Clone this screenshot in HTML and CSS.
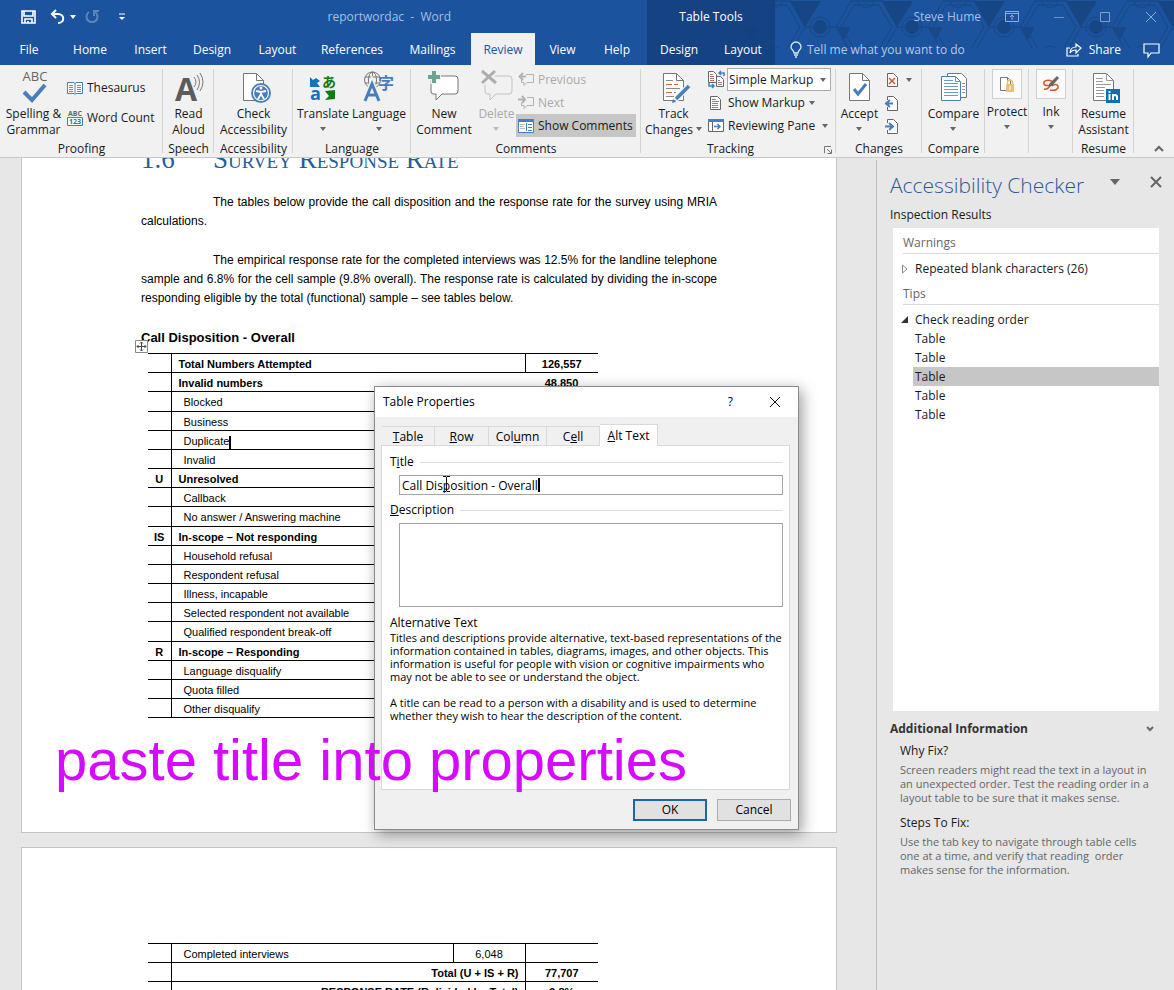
FILE: index.html
```html
<!DOCTYPE html>
<html lang="en">
<head>
<meta charset="utf-8">
<title>reportwordac - Word</title>
<link rel="stylesheet" href="styles.css">
</head>
<body>
<div class="app">
  <header class="header">
    <svg class="header-art" aria-hidden="true">
      <defs>
        <pattern id="hex" width="92" height="54" patternUnits="userSpaceOnUse">
          <g fill="none" stroke="#164684" stroke-width="1">
            <path d="M0 27 15 1h31l15 26-15 26H15zM5 27 18 5h25l13 22-13 22H18zM61 27h31M46 1 61-25M46 53l15 26"/>
            <circle cx="76" cy="27" r="10"/><circle cx="30" cy="0" r="8"/><circle cx="30" cy="54" r="8"/>
          </g>
          <path d="M46 1h31L61 27z" fill="#164684"/>
          <circle cx="76" cy="27" r="7" fill="#164684"/>
          <path d="M0 27h15L8 40z" fill="#18498b"/>
        </pattern>
      </defs>
      <rect width="100%" height="100%" fill="url(#hex)"/>
    </svg>
    <div class="title-row">
      <div class="qat">
        <button class="plain" aria-label="Save"><svg width="16" height="16" viewBox="0 0 16 16" fill="none" stroke="#fff" stroke-width="1.600"><path d="M2 2h13v12H2zM4 2v5h9V2M5 14v-4h7v4M8 12v2"/></svg></button>
        <button class="plain undo" aria-label="Undo"><svg width="15" height="15" viewBox="0 0 15 15" fill="none" stroke="#fff" stroke-width="2"><path d="M6 1 2 5l4 4M2 5h6c7 0 7 9 0 9"/></svg><i class="caret white"></i></button>
        <button class="plain redo" aria-label="Repeat"><svg width="15" height="15" viewBox="0 0 15 15" fill="none" stroke="#5d85bd" stroke-width="2"><path d="M4 3a5.500 5.500 0 1 0 6 0M9 7V2h5"/></svg></button>
        <button class="plain" aria-label="Customize toolbar"><svg width="8" height="8" viewBox="0 0 8 8"><path d="M1 1h6" stroke="#fff"/><path d="M1 4h6L4 7z" fill="#fff"/></svg></button>
      </div>
      <span class="doc-title">reportwordac&nbsp; -&nbsp; Word</span>
    </div>
    <nav class="tabs" aria-label="Ribbon">
      <button>File</button><button>Home</button><button>Insert</button><button>Design</button><button>Layout</button><button>References</button><button>Mailings</button><button class="active">Review</button><button>View</button><button>Help</button>
    </nav>
    <div class="context">
      <span>Table Tools</span>
      <div class="context-tabs"><button>Design</button><button>Layout</button></div>
    </div>
    <div class="window-row">
      <span class="user">Steve Hume</span>
      <svg width="14" height="11" viewBox="0 0 14 11" fill="none" stroke="#90abd4"><path d="M.5.5h13v10H.5zM.5 2.500h13M7 9V4M5 6l2-2 2 2"/></svg>
      <svg width="12" height="12" viewBox="0 0 12 12" fill="none" stroke="#6f93c6"><path d="M1 6.500h10"/></svg>
      <svg width="12" height="12" viewBox="0 0 12 12" fill="none" stroke="#7f9fcd"><path d="M1.500 1.500h9v9h-9z"/></svg>
      <svg width="12" height="12" viewBox="0 0 12 12" fill="none" stroke="#90abd4"><path d="m1 1 10 10M11 1 1 11"/></svg>
    </div>
    <div class="tell-row">
      <button class="tell"><svg width="12" height="16" viewBox="0 0 12 16" fill="none" stroke="#dce7f5" stroke-width="1.300"><path d="M4 11c0-3-3-3-3-6a5 5 0 0 1 10 0c0 3-3 3-3 6zM4 13h4M5 15h2"/></svg>Tell me what you want to do</button>
      <button class="share"><svg width="16" height="14" viewBox="0 0 16 14" fill="none" stroke="#fff" stroke-width="1.200"><path d="M4 5H1v8h11v-2M4 10c0-4 3-6 6-6V1l5 4-5 5V7C7 7 5 8 4 10z"/></svg>Share</button>
      <button class="plain" aria-label="Comments"><svg width="17" height="15" viewBox="0 0 17 15" fill="none" stroke="#fff" stroke-width="1.200"><path d="M1 1h15v9H8l-3 4v-4H1z"/></svg></button>
    </div>
  </header>

  <section class="ribbon" aria-label="Review">
    <div class="group proofing">
      <div class="body">
        <button class="large"><svg width="32" height="32" viewBox="0 0 32 32"><text x="17" y="10" text-anchor="middle" class="abc">ABC</text><path d="m6 21 8 8L27 14" fill="none" stroke="#4a7ebb" stroke-width="4"/></svg><span>Spelling &amp;<br>Grammar</span></button>
        <div class="stack two">
          <button class="small"><svg width="16" height="16" viewBox="0 0 16 16" fill="#fff" stroke="#7a8a9c"><path d="M.5 2.500H7l1 1 1-1h6.500v11H9l-1 1-1-1H.5zM8 3v11" stroke="#4a7ebb"/><path d="M2 5.500h4M2 7.500h4M2 9.500h4M2 11.500h4M10 5.500h4M10 7.500h4M10 9.500h4M10 11.500h4"/></svg>Thesaurus</button>
          <button class="small"><svg width="16" height="18" viewBox="0 0 16 18"><text x="8" y="7" text-anchor="middle" class="mini">ABC</text><path d="M.5 8.500h15v8H.5z" fill="#fff" stroke="#4a7ebb"/><text x="8" y="15" text-anchor="middle" class="mini blue">123</text></svg>Word Count</button>
        </div>
      </div>
      <h2>Proofing</h2>
    </div>
    <div class="group speech">
      <div class="body">
        <button class="large"><svg width="32" height="32" viewBox="0 0 32 32"><text x="2" y="30" class="speak">A</text><path d="M21 6q4 5 0 10M24 4q5 7 0 15M27 2q6 9 0 18" fill="none" stroke="#767676"/></svg><span>Read<br>Aloud</span></button>
      </div>
      <h2>Speech</h2>
    </div>
    <div class="group access">
      <div class="body">
        <button class="large"><svg width="32" height="32" viewBox="0 0 32 32"><path d="M5.500 2.500h13l7 7v20h-20z" fill="#fff" stroke="#777"/><path d="M18.500 2.500v7h7" fill="none" stroke="#777"/><circle cx="23" cy="22" r="10" fill="#4a7ebb"/><circle cx="23" cy="22" r="7.500" fill="none" stroke="#fff" stroke-width="1.200"/><circle cx="23" cy="17" r="1.500" fill="#fff"/><path d="m18 20 5 1 5-1m-5 1v3m-3 4 3-5 3 5" fill="none" stroke="#fff" stroke-width="1.800"/></svg><span>Check<br>Accessibility</span></button>
      </div>
      <h2>Accessibility</h2>
    </div>
    <div class="group language">
      <div class="body">
        <button class="large"><svg width="32" height="32" viewBox="0 0 32 32"><text x="3" y="29" class="tr-a">a</text><text x="15" y="16" class="tr-j">あ</text><path d="M3 6v10h10l-3-4 3-2-4-3-3 2z" fill="#1472c4"/><path d="M28 19v9l-10 1 4-4-4-5z" fill="#107c10"/></svg><span>Translate<br><i class="caret"></i></span></button>
        <button class="large"><svg width="32" height="32" viewBox="0 0 32 32"><g fill="none" stroke="#777"><circle cx="9.500" cy="9" r="8"/><ellipse cx="9.500" cy="9" rx="4" ry="8"/><path d="M9.500 1v16M2 6h15M2 12h15"/></g><path d="m2 30 7-19 7 19M5 24h9" fill="none" stroke="#f1f1f1" stroke-width="5"/><path d="m2 30 7-17 7 17M5 24h9" fill="none" stroke="#4a7ebb" stroke-width="3"/><text x="15" y="18" class="zi">字</text></svg><span>Language<br><i class="caret"></i></span></button>
      </div>
      <h2>Language</h2>
    </div>
    <div class="group comments">
      <div class="body">
        <button class="large"><svg width="32" height="32" viewBox="0 0 32 32"><path d="M5 5h22q3 0 3 3v12q0 3-3 3H14l-6 6v-6H5q-2 0-2-3V8q0-3 2-3z" fill="#fff" stroke="#777"/><path d="M6-1v14M-1 6h14" stroke="#f1f1f1" stroke-width="7"/><path d="M6 0v12M0 6h12" stroke="#6aa58f" stroke-width="4"/></svg><span>New<br>Comment</span></button>
        <button class="large disabled" disabled><svg width="32" height="32" viewBox="0 0 32 32"><path d="M6 5h22q3 0 3 3v12q0 3-3 3H15l-6 6v-6H6q-2 0-2-3V8q0-3 2-3z" fill="none" stroke="#c3c3c3"/><path d="m0-1 17 14M16-1 0 13" stroke="#f1f1f1" stroke-width="6"/><path d="m1 0 14 12M14 0 1 12" stroke="#adadad" stroke-width="3"/></svg><span>Delete<br><i class="caret"></i></span></button>
        <div class="stack">
          <button class="small disabled" disabled><svg width="16" height="16" viewBox="0 0 16 16" fill="none" stroke="#b3b3b3"><path d="M8 2.500h7.500v8H9l-3 3v-3H3.500V8"/><path d="M8 4.500H2M5 1 1.500 4.500 5 8" stroke-width="2"/></svg>Previous</button>
          <button class="small disabled" disabled><svg width="16" height="16" viewBox="0 0 16 16" fill="none" stroke="#b3b3b3"><path d="M9 2.500h6.500v8H9l-3 3v-3H3.500V8"/><path d="M0 4.500h6M4 1l3 3.500L4 8" stroke-width="2"/></svg>Next</button>
          <button class="small pressed"><svg width="16" height="16" viewBox="0 0 16 16"><path d="M.5 1.500h15v13H.5z" fill="#fff" stroke="#4a7ebb"/><path d="M0 1h16v3H0z" fill="#4a7ebb"/><path d="M2 6.500h5M2 8.500h4M2 10.500h5" stroke="#bbb"/><path d="M8.500 5v8M10 6.500h4M10 9.500h4M10 12.500h4" stroke="#4a7ebb"/></svg>Show Comments</button>
        </div>
      </div>
      <h2>Comments</h2>
    </div>
    <div class="group tracking">
      <div class="body">
        <button class="large"><svg width="32" height="32" viewBox="0 0 32 32"><path d="M5.500 2.500h13l7 7v20h-20z" fill="#fff" stroke="#777"/><path d="M18.500 2.500v7h7" fill="none" stroke="#777"/><path d="M8 9.500h7M8 17.500h14M8 25.500h8" stroke="#8a8a8a"/><path d="M8 13.500h12M8 21.500h10" stroke="#d9694a" stroke-dasharray="6 2"/><path d="m17 29 14-14" stroke="#f1f1f1" stroke-width="6"/><path d="m18 28 13-13" stroke="#4a7ebb" stroke-width="3.500"/><path d="m14 32 1-4 3 3z" fill="#4a7ebb"/></svg><span>Track<br>Changes <i class="caret"></i></span></button>
        <div class="stack">
          <label class="small markup"><svg width="17" height="17" viewBox="0 0 17 17"><path d="M.5.5h5l3 3v8h-8zM8.500 5.500h4l3 3v7h-7z" fill="#fff" stroke="#666"/><path d="M2 3.500h3M2 7.500h4M10 9.500h2M10 13.500h4" stroke="#888"/><path d="M2 5.500h4M2 9.500h4M10 11.500h4" stroke="#d9694a"/><path d="M16 5V2h-5m2-2-2 2 2 2M1 12v3h5m-2-2 2 2-2 2" fill="none" stroke="#4a7ebb" stroke-width="1.500"/></svg><select aria-label="Display for review"><option>Simple Markup</option></select><i class="caret"></i></label>
          <button class="small"><svg width="16" height="16" viewBox="0 0 16 16"><path d="M2.500 1.500h7l3 3v10h-10z" fill="#fff" stroke="#666"/><path d="M4 4.500h4M4 8.500h6M4 12.500h6" stroke="#888"/><path d="M4 6.500h7M4 10.500h6" stroke="#d9694a"/></svg>Show Markup<i class="caret"></i></button>
          <button class="small"><svg width="16" height="16" viewBox="0 0 16 16"><path d="M.5 1.500h15v12H.5z" fill="#fff" stroke="#666"/><path d="M0 1h16v3H0z" fill="#4a7ebb"/><path d="M4.500 4v9" stroke="#666"/><path d="M6 8.500h6M9.500 6 12 8.500 9.500 11" fill="none" stroke="#4a7ebb" stroke-width="1.500"/></svg>Reviewing Pane<i class="caret far"></i></button>
        </div>
      </div>
      <h2>Tracking<button class="plain launch" aria-label="Tracking options"><svg width="8" height="8" viewBox="0 0 8 8" fill="none" stroke="#777"><path d="M.5 7V.5H7M3 3l4 4M7.500 3.500v4h-4"/></svg></button></h2>
    </div>
    <div class="group changes">
      <div class="body">
        <button class="large"><svg width="32" height="32" viewBox="0 0 32 32"><path d="M5.500 2.500h13l7 7v20h-20z" fill="#fff" stroke="#777"/><path d="M18.500 2.500v7h7" fill="none" stroke="#777"/><path d="m10 18 4 5 8-10" fill="none" stroke="#4a7ebb" stroke-width="3"/></svg><span>Accept<br><i class="caret"></i></span></button>
        <div class="stack">
          <button class="small" aria-label="Reject"><svg width="14" height="16" viewBox="0 0 14 16"><path d="M2.500 1.500h6l4 4v9h-10z" fill="#fff" stroke="#666"/><path d="m4 6 6 6M10 6l-6 6" stroke="#d9532c" stroke-width="1.500"/></svg><i class="caret far"></i></button>
          <button class="small" aria-label="Previous change"><svg width="14" height="16" viewBox="0 0 14 16" fill="none"><path d="M2.500 5V1.500h6l4 4v10h-10V12" fill="#fff" stroke="#666"/><path d="M8 8.500H2M5 5 1 8.500 5 12" stroke="#4a7ebb" stroke-width="2"/></svg></button>
          <button class="small" aria-label="Next change"><svg width="14" height="16" viewBox="0 0 14 16" fill="none"><path d="M2.500 5V1.500h6l4 4v10h-10V12" fill="#fff" stroke="#666"/><path d="M0 8.500h7M4 5l4 3.500L4 12" stroke="#4a7ebb" stroke-width="2"/></svg></button>
        </div>
      </div>
      <h2>Changes</h2>
    </div>
    <div class="group compare">
      <div class="body">
        <button class="large"><svg width="32" height="32" viewBox="0 0 32 32" fill="#fff"><path d="M9.500 2.500h14l5 5v19h-19z" stroke="#777"/><path d="M24 12.500h3M24 15.500h3M24 18.500h3M24 21.500h3" stroke="#999"/><path d="M3.500 5.500h14l5 5v19h-19z" stroke="#4a7ebb"/><path d="M17.500 5.500v5h5M6 9.500h9M6 12.500h14M6 15.500h14M6 18.500h14M6 21.500h14M6 24.500h14" fill="none" stroke="#6c9ace"/></svg><span>Compare<br><i class="caret"></i></span></button>
      </div>
      <h2>Compare</h2>
    </div>
    <div class="group collapsed">
      <button><b><svg width="16" height="16" viewBox="0 0 16 16"><path d="M1.500 1.500h7l3 3v10h-10z" fill="#fff" stroke="#777"/><path d="M8.500 1.500v3h3" fill="none" stroke="#777"/><path d="M7 8h8v8H7z" fill="#e9c07c"/><path d="M8.500 8V5.500q2.500-3 5 0V8" fill="none" stroke="#e9c07c" stroke-width="1.500"/><path d="M11 10v4" stroke="#fff"/></svg></b>Protect<i class="caret"></i></button>
    </div>
    <div class="group collapsed">
      <button><b><svg width="18" height="18" viewBox="0 0 18 18" fill="none"><path d="M10 6C5 4 1 6 2 9s7 0 5 3-5 2-5 2M8 15c5 1 9-1 8-4-1-2-4-2-6 0" stroke="#d9532c" stroke-width="1.500"/><path d="m7 12 3-1 7-8-2-2-8 8z" fill="#666"/></svg></b>Ink<i class="caret"></i></button>
    </div>
    <div class="group resume">
      <div class="body">
        <button class="large"><svg width="32" height="32" viewBox="0 0 32 32"><path d="M5.500 2.500h13l7 7v20h-20z" fill="#fff" stroke="#777"/><path d="M18.500 2.500v7h7M8 7.500h7M8 10.500h7M8 13.500h15M8 16.500h9M8 19.500h8M8 22.500h8M8 25.500h8" fill="none" stroke="#999"/><path d="M18 18h14v14H18z" fill="#0b6fb5"/><path d="M21.500 23v6M21.500 20v2M25 29v-6m0 3q0-2 2-2t2 2v3" fill="none" stroke="#fff" stroke-width="2"/></svg><span>Resume<br>Assistant</span></button>
      </div>
      <h2>Resume</h2>
    </div>
    <button class="plain collapse" aria-label="Collapse the ribbon"><svg width="10" height="6" viewBox="0 0 10 6" fill="none" stroke="#666" stroke-width="2"><path d="m1 5 4-4 4 4"/></svg></button>
  </section>

  <div class="work">
    <main class="canvas">
      <article class="page first">
        <h1><span>1.6</span>Survey Response Rate</h1>
        <p>The tables below provide the call disposition and the response rate for the survey using MRIA calculations.</p>
        <p>The empirical response rate for the completed interviews was 12.5% for the landline telephone sample and 6.8% for the cell sample (9.8% overall). The response rate is calculated by dividing the in-scope responding eligible by the total (functional) sample – see tables below.</p>
        <div class="caption"><h3>Call Disposition - Overall</h3>
          <svg class="handle" width="13" height="13" viewBox="0 0 13 13" fill="none"><path d="M.5.5h12v12H.5z" fill="#fff" stroke="#888"/><path d="M6.500 2v9M2 6.500h9M5 3.500l1.500-1.500L8 3.500M5 9.500 6.500 11 8 9.500M3.500 5 2 6.500 3.500 8M9.500 5 11 6.500 9.500 8" stroke="#444"/></svg>
        </div>
        <table class="grid">
          <colgroup><col class="c-code"><col><col class="c-total"></colgroup>
          <tr class="strong"><td></td><td class="ruled">Total Numbers Attempted</td><td>126,557</td></tr>
          <tr class="strong"><td></td><td>Invalid numbers</td><td>48,850</td></tr>
          <tr><td></td><td>Blocked</td><td></td></tr>
          <tr><td></td><td>Business</td><td></td></tr>
          <tr><td></td><td>Duplicate<i class="cursor"></i></td><td></td></tr>
          <tr><td></td><td>Invalid</td><td></td></tr>
          <tr class="strong"><td>U</td><td>Unresolved</td><td></td></tr>
          <tr><td></td><td>Callback</td><td></td></tr>
          <tr><td></td><td>No answer / Answering machine</td><td></td></tr>
          <tr class="strong"><td>IS</td><td>In-scope – Not responding</td><td></td></tr>
          <tr><td></td><td>Household refusal</td><td></td></tr>
          <tr><td></td><td>Respondent refusal</td><td></td></tr>
          <tr><td></td><td>Illness, incapable</td><td></td></tr>
          <tr><td></td><td>Selected respondent not available</td><td></td></tr>
          <tr><td></td><td>Qualified respondent break-off</td><td></td></tr>
          <tr class="strong"><td>R</td><td>In-scope – Responding</td><td></td></tr>
          <tr><td></td><td>Language disqualify</td><td></td></tr>
          <tr><td></td><td>Quota filled</td><td></td></tr>
          <tr><td></td><td>Other disqualify</td><td></td></tr>
        </table>
      </article>
      <article class="page second">
        <table class="grid">
          <colgroup><col class="c-code"><col><col class="c-part"><col class="c-total"></colgroup>
          <tr><td></td><td class="ruled">Completed interviews</td><td class="ruled">6,048</td><td></td></tr>
          <tr class="strong sum"><td></td><td colspan="2" class="ruled">Total (U + IS + R)</td><td>77,707</td></tr>
          <tr class="strong sum"><td></td><td colspan="2" class="ruled">RESPONSE RATE (R divided by Total)</td><td>9.8%</td></tr>
        </table>
      </article>

      <section class="dialog" role="dialog" aria-labelledby="dlg-title">
        <div class="dialog-bar">
          <h2 id="dlg-title">Table Properties</h2>
          <button class="plain help" aria-label="Help">?</button>
          <button class="plain" aria-label="Close"><svg width="12" height="12" viewBox="0 0 12 12" stroke="#111"><path d="m1 1 10 10M11 1 1 11"/></svg></button>
        </div>
        <div class="dialog-tabs">
          <button><u>T</u>able</button><button><u>R</u>ow</button><button>Col<u>u</u>mn</button><button>C<u>e</u>ll</button><button class="active"><u>A</u>lt Text</button>
        </div>
        <div class="panel">
          <label class="rule" for="alt-title"><span>T<u>i</u>tle</span></label>
          <div class="field">
            <input id="alt-title" type="text" value="Call Disposition - Overall">
            <i class="cursor"></i>
            <svg class="ibeam" width="9" height="16" viewBox="0 0 9 16" fill="none" stroke="#111"><path d="M1 .5h3l.5.5.5-.5h3M4.500 1v14M1 15.500h3l.5-.5.5.5h3"/></svg>
          </div>
          <label class="rule" for="alt-desc"><span><u>D</u>escription</span></label>
          <textarea id="alt-desc"></textarea>
          <h3>Alternative Text</h3>
          <p>Titles and descriptions provide alternative, text-based representations of the information contained in tables, diagrams, images, and other objects. This information is useful for people with vision or cognitive impairments who may not be able to see or understand the object.</p>
          <p>A title can be read to a person with a disability and is used to determine whether they wish to hear the description of the content.</p>
        </div>
        <div class="dialog-actions"><button class="default">OK</button><button>Cancel</button></div>
      </section>
      <div class="subtitle">paste title into properties</div>
    </main>

    <aside class="pane">
      <div class="pane-head">
        <h2>Accessibility Checker</h2>
        <button class="plain" aria-label="Pane options"><svg width="10" height="6" viewBox="0 0 10 6"><path d="M0 0h10L5 6z" fill="#666"/></svg></button>
        <button class="plain" aria-label="Close pane"><svg width="10" height="10" viewBox="0 0 10 10" stroke="#666" stroke-width="2"><path d="m0 0 10 10M10 0 0 10"/></svg></button>
      </div>
      <h3 class="results-title">Inspection Results</h3>
      <div class="results">
        <h4>Warnings</h4>
        <div class="node"><svg width="8" height="10" viewBox="0 0 8 10"><path d="M1.500 1v8L6 5z" fill="#fff" stroke="#888"/></svg>Repeated blank characters (26)</div>
        <h4>Tips</h4>
        <div class="node"><svg width="8" height="10" viewBox="0 0 8 10"><path d="M7 1v7H0z" fill="#333"/></svg>Check reading order</div>
        <ul><li>Table</li><li>Table</li><li class="selected">Table</li><li>Table</li><li>Table</li></ul>
      </div>
      <div class="info">
        <h3>Additional Information<svg width="8" height="6" viewBox="0 0 8 6" fill="none" stroke="#666" stroke-width="2"><path d="m1 1 3 3 3-3"/></svg></h3>
        <h4>Why Fix?</h4>
        <p>Screen readers might read the text in a layout in an unexpected order. Test the reading order in a layout table to be sure that it makes sense.</p>
        <h4>Steps To Fix:</h4>
        <p>Use the tab key to navigate through table cells one at a time, and verify that reading&nbsp; order makes sense for the information.</p>
      </div>
    </aside>
  </div>
</div>
</body>
</html>
```
FILE: styles.css
```css
* { box-sizing: border-box; }
body { margin: 0; font: 12px/16px "Open Sans", "Noto Sans", sans-serif; color: #1a1a1a; }
h1, h2, h3, h4, p, ul { margin: 0; padding: 0; font-size: inherit; font-weight: normal; }
button { margin: 0; padding: 0; border: 0; background: none; font: inherit; color: inherit; white-space: nowrap; }
svg { display: block; flex: none; overflow: visible; }
.plain { display: flex; align-items: center; }
.app { display: flex; flex-direction: column; height: 100vh; overflow: hidden; background: #e7e7e7; }

.caret { display: inline-block; flex: none; border: 3px solid transparent; border-top: 4px solid #666; border-bottom: 0; }
.caret.white { border-top-color: #fff; }
.cursor { display: inline-block; width: 2px; height: 14px; background: #000; }

/* Title bar and tabs */
.header { position: relative; display: grid; grid-template: 33px 32px / 647px 128px 1fr; background: #1b539f; color: #fff; }
.header-art { position: absolute; top: 0; right: 0; width: 430px; height: 48px; overflow: hidden; }
.title-row { display: flex; align-items: center; justify-content: space-between; padding: 0 196px 0 20px; }
.qat { display: flex; align-items: center; gap: 14px; }
.undo { gap: 5px; }
.redo { margin: 0 4px 0 -5px; }
.doc-title, .user { color: #a9bfdf; }
.tabs { grid-row: 2; display: grid; grid-template-columns: 58px 64px 57px 66px 65px 84px 77px 64px 55px 54px; }
.tabs button, .context-tabs button { padding-top: 2px; }
.tabs .active { background: #f1f1f1; color: #1b539f; }
.context { position: relative; grid-row: 1 / 3; grid-column: 2; display: grid; grid-template-rows: 33px 32px; background: #14407fdd; text-align: center; line-height: 33px; }
.context-tabs { display: grid; grid-template-columns: 1fr 1fr; line-height: 16px; }
.window-row { position: relative; grid-column: 3; display: flex; align-items: center; justify-content: flex-end; gap: 34px; padding-right: 17px; }
.user { margin-right: -10px; }
.tell-row { position: relative; grid-column: 3; display: flex; align-items: center; gap: 22px; padding: 2px 14px 0 15px; }
.tell, .share { display: flex; align-items: center; gap: 5px; }
.tell { margin-right: auto; color: #b5c9e6; }
.share { gap: 7px; }

/* Ribbon */
.ribbon { display: flex; height: 93px; background: #f1f1f1; border-bottom: 1px solid #c8c8c8; }
.group { position: relative; display: flex; flex-direction: column; flex: none; }
.group::after { content: ""; position: absolute; right: 0; top: 4px; bottom: 4px; width: 1px; background: #d4d4d4; }
.group h2 { height: 16px; text-align: center; }
.body { display: flex; height: 76px; }
.large { display: flex; flex: 1; flex-direction: column; align-items: center; gap: 3px; padding-top: 6px; }
.large .caret { margin-bottom: 3px; }
.stack { display: flex; flex-direction: column; padding-top: 3px; }
.stack.two { gap: 7px; padding-top: 11px; }
.small { display: flex; align-items: center; gap: 4px; height: 23px; padding: 0 3px 0 2px; }
.disabled { color: #a9a9a9; }
.disabled .caret { border-top-color: #bbb; }
.pressed { background: #c6c6c6; }
.proofing { width: 163px; }
.proofing .large { flex: none; width: 65px; padding-left: 2px; }
.speech { width: 51px; }
.access { width: 79px; }
.language { width: 118px; }
.language .body { padding: 0 4px 0 2px; }
.comments { width: 230px; }
.comments .large:first-child { flex: none; width: 66px; }
.comments .stack { width: 125px; padding-right: 5px; }
.tracking { width: 195px; }
.tracking .stack { width: 130px; padding-right: 5px; }
.tracking h2 { position: relative; padding-right: 16px; }
.launch { position: absolute; right: 4px; top: 5px; }
.tracking .markup { position: relative; padding-right: 0; gap: 2px; }
.markup select { flex: 1; width: 100px; height: 23px; padding: 0 1px; border: 1px solid #ababab; border-radius: 0; background: #fff; font: inherit; color: inherit; appearance: none; }
.markup .caret { position: absolute; right: 5px; }
.far { margin-left: auto; }
.changes { width: 86px; }
.changes .stack { width: 39px; padding-right: 7px; }
.compare { width: 63px; }
.collapsed { width: 44px; align-items: center; }
.collapsed button { display: flex; flex-direction: column; align-items: center; gap: 5px; padding-top: 4px; }
.collapsed b { display: flex; align-items: center; justify-content: center; width: 30px; height: 30px; border: 1px solid #d0d0d0; background: #fafafa; }
.resume { width: 61px; }
.abc { font: 13px "Open Sans", sans-serif; fill: #666; }
.speak { font: bold 32px "Open Sans", sans-serif; fill: #5c5c5c; }
.mini { font: bold 7px "Open Sans", sans-serif; fill: #666; }
.mini.blue { fill: #2f6cb3; }
.tr-a { font: bold 18px "Open Sans", sans-serif; fill: #1472c4; }
.tr-j { font: bold 14px "Noto Sans CJK JP", sans-serif; fill: #107c10; }
.zi { font: bold 16px "Noto Sans CJK JP", sans-serif; fill: #4a7ebb; }
.collapse { align-self: flex-end; margin: 0 10px 5px auto; }

/* Document */
.work { display: flex; flex: 1; min-height: 0; }
.canvas { position: relative; flex: 1; padding: 0 39px 0 21px; overflow: hidden; }
.page { border: 1px solid #c4c4c4; background: #fff; color: #000; font: 12px/19px "Liberation Sans Narrow", "Arial Narrow", "Liberation Sans", sans-serif; }
.first { height: 688px; padding: 0 119px; border-top: 0; }
.page h1 { display: flex; margin: -13px 0 20px; color: #1f6099; font: small-caps 27px/28px "Liberation Serif", serif; }
.page h1 span { width: 72px; }
.page p { margin-bottom: 20px; text-align: justify; text-indent: 72px; }
.caption { position: relative; height: 25px; font-size: 13px; }
.caption h3 { font-weight: bold; }
.handle { position: absolute; left: -6px; top: 12px; }
.grid { width: 450px; margin-left: 7px; border-collapse: collapse; table-layout: fixed; font-size: 11px; line-height: 16px; }
.c-code { width: 23px; }
.c-part { width: 72px; }
.c-total { width: 73px; }
.grid tr { height: 19px; border: 1px solid #000; border-width: 1px 0; }
.first .grid tr:nth-child(6n+3) { height: 20px; }
.grid td { padding: 1px 0 0; text-align: center; white-space: nowrap; }
.grid td:first-child { border-right: 1px solid #000; }
.grid td:nth-child(2) { padding-left: 12px; text-align: left; }
.grid .strong { font-weight: bold; }
.grid .strong td:nth-child(2) { padding-left: 7px; }
.grid .sum td:nth-child(2) { padding-right: 6px; text-align: right; }
.grid .ruled { border-right: 1px solid #000; }
.grid .cursor { height: 13px; vertical-align: bottom; }
.second { height: 400px; margin-top: 14px; padding: 95px 119px 0; }

/* Table Properties dialog */
.dialog { position: absolute; left: 374px; top: 228px; width: 425px; border: 1px solid #8b8b8b; background: #f0f0f0; box-shadow: 3px 4px 14px #0006; color: #000; }
.dialog-bar { display: flex; align-items: center; gap: 36px; height: 30px; padding: 0 17px 0 8px; background: #fff; }
.dialog-bar h2 { margin-right: auto; }
.help { font-weight: 500; }
.dialog-tabs { display: grid; grid-template-columns: 53px 54px 58px 53px 58px; align-items: end; margin: 7px 0 -1px 7px; }
.dialog-tabs button { height: 20px; border: 1px solid #d9d9d9; border-width: 1px 1px 0 0; }
.dialog-tabs .active { position: relative; height: 22px; background: #fff; }
.panel { margin: 0 8px 0 6px; height: 345px; padding: 8px 6px 0 8px; border: 1px solid #d9d9d9; background: #fff; }
.rule { display: flex; align-items: center; gap: 6px; }
.rule::after { content: ""; flex: 1; height: 1px; background: #dcdcdc; }
.field { position: relative; margin: 5px 0 7px 9px; }
.field input { display: block; width: 100%; height: 20px; padding: 0 2px; border: 1px solid #a5a5a5; font: inherit; color: inherit; }
.field .cursor { position: absolute; left: 139px; top: 3px; }
.ibeam { position: absolute; left: 43px; top: 1px; }
.panel textarea { display: block; width: calc(100% - 9px); height: 84px; margin: 5px 0 8px 9px; border: 1px solid #a5a5a5; resize: none; }
.panel p { margin-bottom: 13px; font-size: 11px; line-height: 13px; }
.dialog-actions { display: flex; justify-content: flex-end; gap: 10px; padding: 9px 7px 8px; }
.dialog-actions button { width: 74px; height: 22px; border: 1px solid #adadad; background: #e1e1e1; }
.dialog-actions .default { border: 2px solid #1667ad; }
.subtitle { position: absolute; left: 55px; top: 567px; color: #d60aff; font: 58px/70px "Liberation Sans", sans-serif; white-space: nowrap; }

/* Accessibility pane */
.pane { width: 298px; margin-top: 2px; padding: 11px 15px 0 13px; border-left: 1px solid #bdbdbd; }
.pane-head { display: flex; align-items: center; gap: 26px; padding-right: 4px; }
.pane-head h2 { margin-right: auto; color: #2b579a; font: 300 21px/28px "Open Sans", "Noto Sans", sans-serif; white-space: nowrap; }
.pane-head .plain { margin-top: -6px; }
.pane-head .plain:last-child { margin-left: 5px; }
.results-title { margin: 8px 0 5px; }
.results { height: 483px; margin-left: 3px; padding: 7px 0 0 10px; background: #fff; }
.results h4 { height: 19px; border-bottom: 1px solid #dadada; color: #666; }
.node { display: flex; align-items: center; gap: 6px; height: 29px; margin: 0 0 3px -2px; }
.results ul { margin: -8px 0 0 10px; list-style: none; }
.results li { height: 19px; padding-left: 2px; line-height: 19px; }
.results .selected { background: #c6c6c6; }
.info { padding-top: 10px; color: #666; font-size: 11px; line-height: 14px; }
.info h3 { display: flex; align-items: center; justify-content: space-between; padding-right: 5px; margin-bottom: 6px; color: #333; font-size: 12px; font-weight: bold; line-height: 16px; }
.info h4 { margin: 0 0 4px 10px; color: #1a1a1a; font-size: 12px; line-height: 16px; }
.info p { margin: 0 8px 10px 10px; }
```
